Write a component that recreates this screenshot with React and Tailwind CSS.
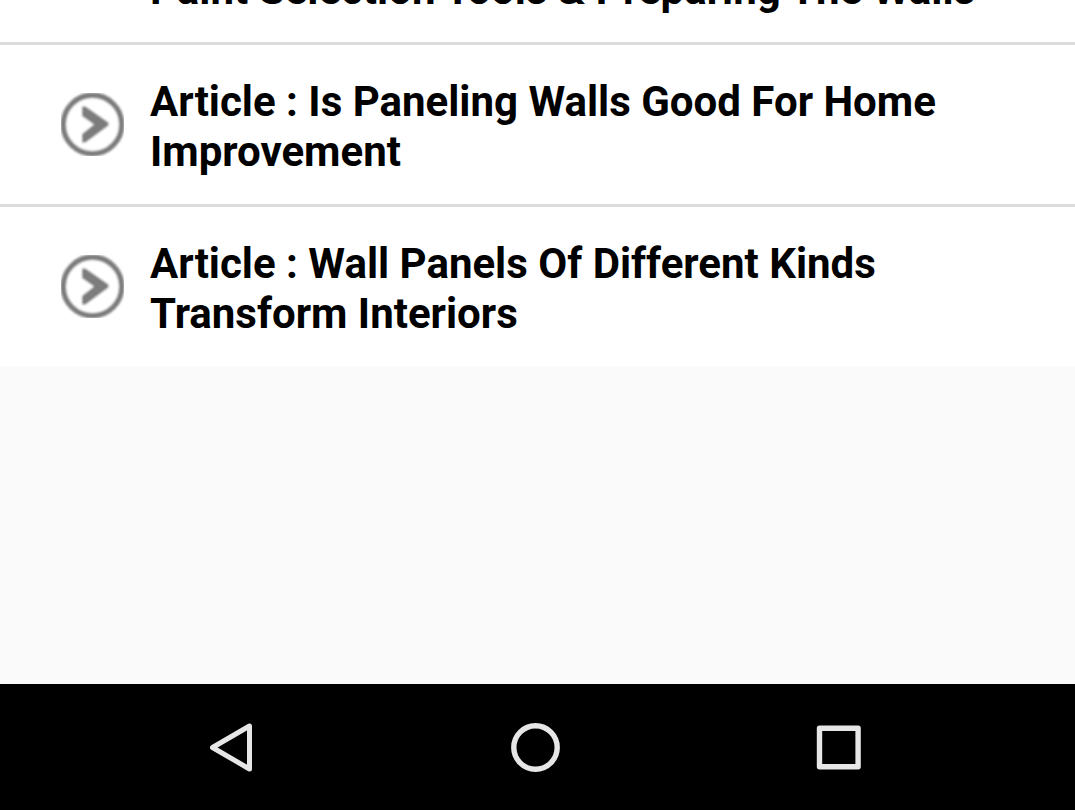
const articles = [
  "Article : Is Paneling Walls Good For Home Improvement",
  "Article : Wall Panels Of Different Kinds Transform Interiors",
];

function ArrowIcon() {
  return (
    <svg viewBox="0 0 63 63" className="size-[63px] shrink-0" aria-hidden="true">
      <defs>
        <filter id="soften" filterUnits="userSpaceOnUse" x="0" y="0" width="63" height="63">
          <feGaussianBlur stdDeviation="1.1" />
        </filter>
      </defs>
      <g filter="url(#soften)">
        <circle cx="31.5" cy="31.5" r="29.2" fill="#fff" stroke="#7c7c7c" strokeWidth="5.4" />
        <path
          d="M21 13.5L24.5 13.5L47.5 29.5V32.5L24.5 49.5H21V41L33 31.5L21 23Z"
          fill="#7b7b7b"
        />
      </g>
    </svg>
  );
}

function NavButton({ label, children }) {
  return (
    <button type="button" aria-label={label} className="flex h-full w-76 items-center justify-center">
      <svg
        viewBox="0 0 50 50"
        className="size-[50px]"
        fill="none"
        stroke="#e6e6e6"
        strokeLinejoin="round"
        aria-hidden="true"
      >
        {children}
      </svg>
    </button>
  );
}

export default function App() {
  return (
    <div className="flex h-screen flex-col bg-[#fafafa] font-['Roboto',sans-serif]">
      <main className="min-h-0 flex-1 overflow-hidden">
        <ul className="divide-y-3 divide-[#dcdcdc] bg-white text-[42px] leading-[50px] font-bold text-black">
          <li className="flex h-[45px] items-end overflow-hidden pb-[27px] pl-[150px]">
            <a href="#paint-selection" className="shrink-0">
              Paint Selection Tools &amp; Preparing The Walls
            </a>
          </li>
          {articles.map((title) => (
            <li key={title}>
              <a href="#article" className="flex items-center gap-[26px] py-[27px] pr-20 pl-[61px]">
                <ArrowIcon />
                <span className="pt-[5px]">{title}</span>
              </a>
            </li>
          ))}
        </ul>
      </main>
      <nav className="flex h-[126px] shrink-0 justify-center bg-black pr-[5px]">
        <NavButton label="Back">
          <path d="M6.5 25.5L43.5 4V47Z" strokeWidth="5" />
        </NavButton>
        <NavButton label="Home">
          <circle cx="25.5" cy="25.5" r="21.7" strokeWidth="5.4" />
        </NavButton>
        <NavButton label="Recent apps">
          <rect x="5.5" y="6.2" width="38.6" height="38.6" strokeWidth="5.4" />
        </NavButton>
      </nav>
    </div>
  );
}
